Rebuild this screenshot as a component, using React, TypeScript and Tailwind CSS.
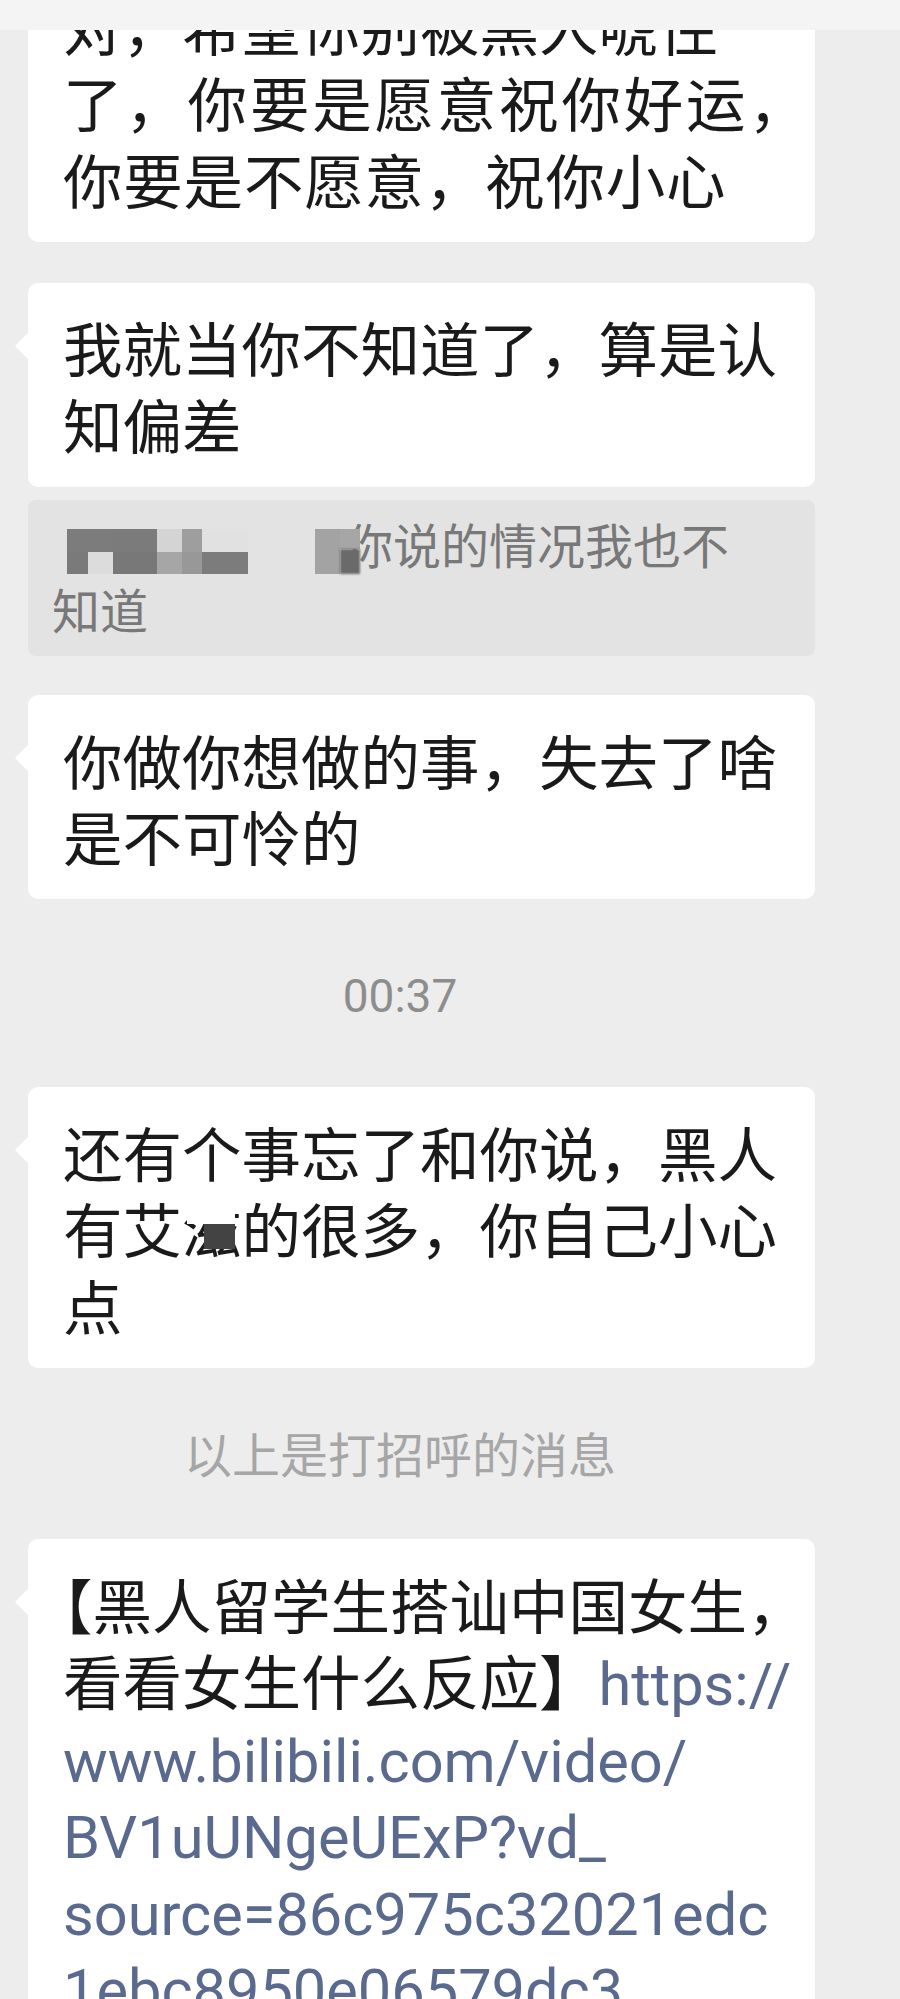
import React from 'react'

// 聊天记录截图：白色气泡 + 引用 + 时间 + 链接

const CJK = "font-['Noto_Sans_CJK_SC',sans-serif]"
const LATIN = "font-['Roboto','Liberation_Sans',sans-serif]"

// 一行文字，固定行高，避免中英文混排撑高行盒
const Line = ({ children, className = '' }: { children: React.ReactNode; className?: string }) => (
  <div className={`h-[76.6px] whitespace-nowrap leading-[76.6px] ${className}`}>{children}</div>
)

const Bubble = ({ children, className = '', tail = true }: { children: React.ReactNode; className?: string; tail?: boolean }) => (
  <div className={`relative rounded-[10px] bg-white py-[25.5px] pl-[35px] ${className}`}>
    {tail && (
      <div className="absolute left-[-13px] top-[49px] h-0 w-0 border-y-[14px] border-r-[14px] border-y-transparent border-r-white" />
    )}
    {children}
  </div>
)

const Link = ({ children }: { children: React.ReactNode }) => (
  <span className={`${LATIN} text-[#5a6a8e]`}>{children}</span>
)

export default function App() {
  return (
    <div className={`relative h-[1999px] overflow-hidden bg-[#ededed] text-[59.5px] text-[#1a1a1a] ${CJK}`}>
      {/* 顶部栏遮住第一条消息的上半 */}
      <div className="absolute inset-x-0 top-0 z-10 h-[30px] bg-[#f4f4f4]" />

      <div className="w-[815px] pl-[28px]">
        <Bubble className="mt-[-38.8px]" tail={false}>
          <Line>对，希望你别被黑人唬住</Line>
          <Line className="tracking-[2.8px]">了，你要是愿意祝你好运，</Line>
          <Line className="tracking-[0.8px]">你要是不愿意，祝你小心</Line>
        </Bubble>

        <Bubble className="mt-[41px]">
          <Line>我就当你不知道了，算是认</Line>
          <Line>知偏差</Line>
        </Bubble>

        {/* 引用消息 */}
        <div className="mt-[13px] rounded-[8px] bg-[#e3e3e3] pb-[15px] pl-[24px] pt-[11px] text-[48px] text-[#787878]">
          <div className="relative h-[65px] whitespace-nowrap leading-[65px]">
            <span className="pl-[293px]">你说的情况我也不</span>
            {/* 打码的昵称 */}
            <div className="absolute left-[15px] top-[18px] flex h-[45px]">
              <div className="flex w-[21px] flex-col">
                <div className="h-[23px] bg-[#7c7c7c]" />
                <div className="flex-1 bg-[#7a7a7a]" />
              </div>
              <div className="flex w-[25px] flex-col">
                <div className="h-[23px] bg-[#7c7c7c]" />
                <div className="flex-1 bg-[#dcdcdc]" />
              </div>
              <div className="flex w-[44px] flex-col">
                <div className="h-[23px] bg-[#7b7b7b]" />
                <div className="flex-1 bg-[#787878]" />
              </div>
              <div className="flex w-[25px] flex-col">
                <div className="h-[23px] bg-[#d4d4d4]" />
                <div className="flex-1 bg-[#a6a6a6]" />
              </div>
              <div className="flex w-[20px] flex-col">
                <div className="h-[23px] bg-[#9e9e9e]" />
                <div className="flex-1 bg-[#989898]" />
              </div>
              <div className="flex w-[46px] flex-col">
                <div className="h-[23px] bg-[#e1e1e1]" />
                <div className="flex-1 bg-[#7c7c7c]" />
              </div>
            </div>
            <div className="absolute left-[263px] top-[18px] flex h-[45px]">
              <div className="w-[25px] bg-[#a3a3a3]" />
              <div className="flex w-[20px] flex-col">
                <div className="h-[20px] bg-[#a6a6a6]" />
                <div className="flex-1 bg-[#6a6a6a] blur-[1px]" />
              </div>
            </div>
          </div>
          <div className="h-[65px] whitespace-nowrap leading-[65px]">知道</div>
        </div>

        <Bubble className="mt-[39px]">
          <Line>你做你想做的事，失去了啥</Line>
          <Line>是不可怜的</Line>
        </Bubble>
      </div>

      <div className={`mt-[74px] flex justify-center pr-[100px] text-[46px] leading-[46px] text-[#8d8d8d] ${LATIN}`}>
        00:37
      </div>

      <div className="w-[815px] pl-[28px]">
        <Bubble className="mt-[67.7px]">
          <Line>还有个事忘了和你说，黑人</Line>
          <Line>
            有艾
            <span className="relative">
              滋
              <span className="absolute left-[5px] top-[19px] h-[21px] w-[48px] bg-white" />
              <span className="absolute left-[22px] top-[40px] h-[25px] w-[31px] bg-[#434343]" />
            </span>
            的很多，你自己小心
          </Line>
          <Line>点</Line>
        </Bubble>
      </div>

      <div className="mt-[60.5px] flex justify-center pr-[100px] text-[48px] leading-[48px] text-[#a6a6a6]">
        以上是打招呼的消息
      </div>

      <div className="w-[815px] pl-[28px]">
        <Bubble className="mt-[62.7px]">
          <Line>
            <span className="ml-[-30px]">【</span>黑人留学生搭讪中国女生，
          </Line>
          <Line>
            看看女生什么反应】<Link>https://</Link>
          </Line>
          <Line>
            <Link>www.bilibili.com/video/</Link>
          </Line>
          <Line>
            <Link>BV1uUNgeUExP?vd_</Link>
          </Line>
          <Line>
            <Link>source=86c975c32021edc</Link>
          </Line>
          <Line>
            <Link>1ebc8950e06579dc3</Link>
          </Line>
          <Line>
            <Link>&amp;spm_id_from=333.788</Link>
          </Line>
        </Bubble>
      </div>
    </div>
  )
}
